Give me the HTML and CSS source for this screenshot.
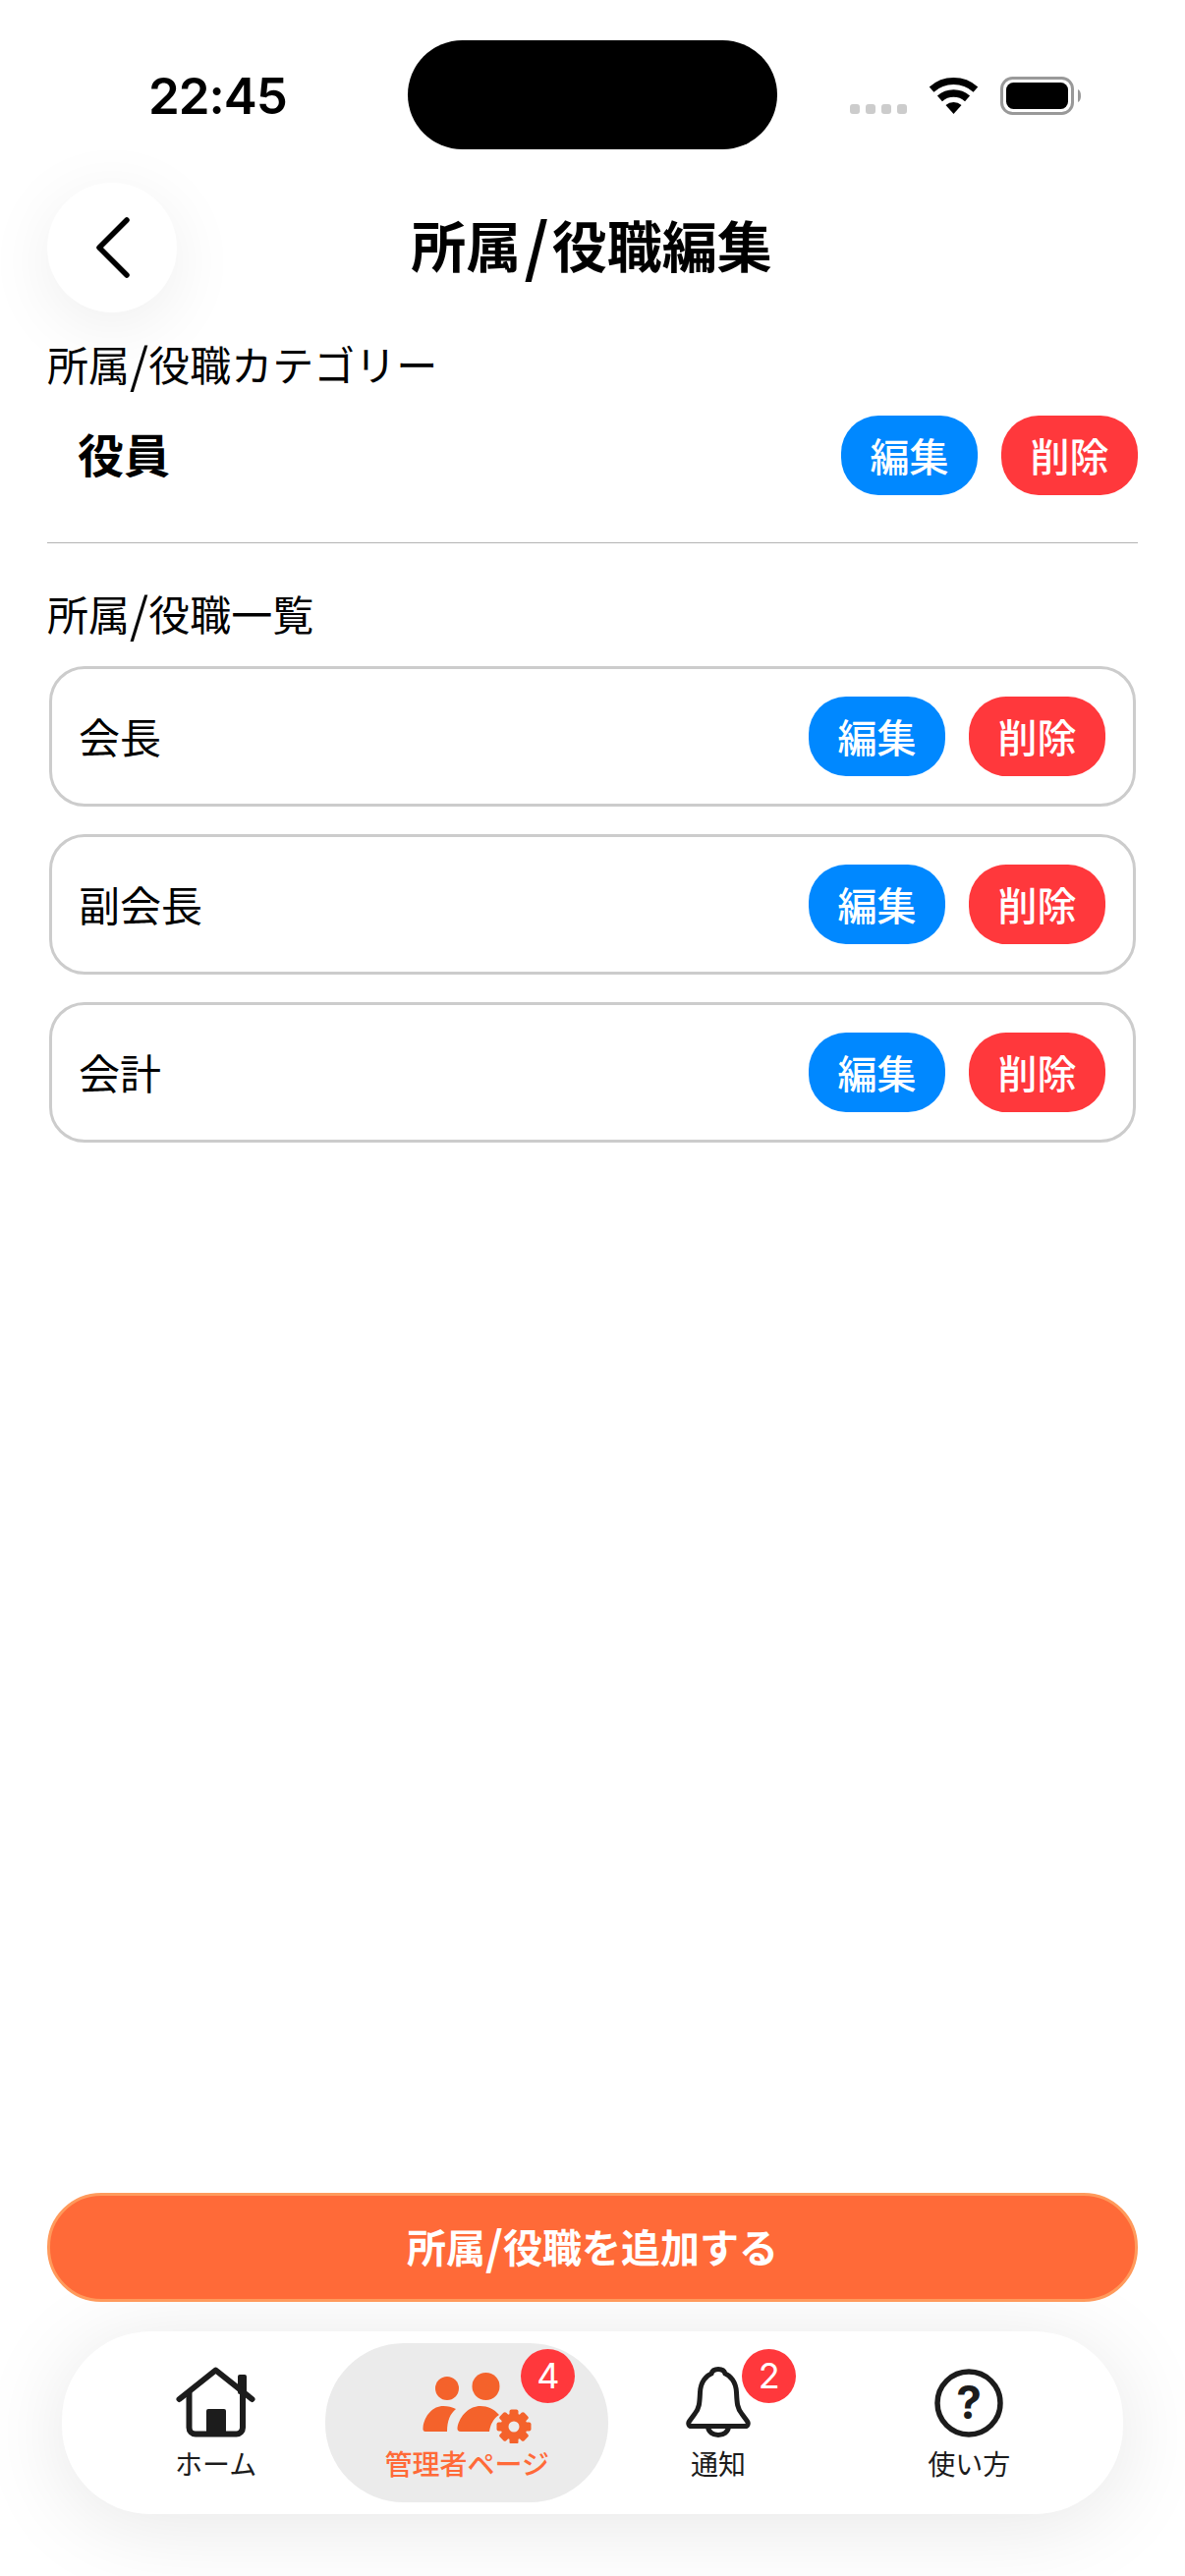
FILE: index.html
```html
<!DOCTYPE html>
<html lang="ja">
<head>
    <meta charset="UTF-8">
    <title>所属/役職編集</title>
    <link rel="stylesheet" href="styles.css">
</head>

<body>
    <div class="screen">
        <div class="status-bar">
            <span class="time">22:45</span>
            <div class="island"></div>
            <div class="status-icons">
                <div class="signal"><i></i><i></i><i></i><i></i></div>
                <svg class="wifi" width="51" height="37" viewBox="0 0 51 37">
                    <path d="M3.1 12.1A33.5 33.5 0 0 1 47.9 12.1" fill="none" stroke="#000" stroke-width="7"/>
                    <path d="M11.45 21.4A21 21 0 0 1 39.55 21.4" fill="none" stroke="#000" stroke-width="7.5"/>
                    <path d="M25.5 37L17.5 28.1A12 12 0 0 1 33.5 28.1Z" fill="#000"/>
                </svg>
                <svg class="battery" width="82" height="39" viewBox="0 0 82 39">
                    <rect x="1.5" y="1.5" width="72" height="36" rx="11" fill="none" stroke="#999" stroke-width="3"/>
                    <rect x="6" y="6" width="63" height="27" rx="7.5" fill="#000"/>
                    <path d="M79 13v13c2.500-1 3-4 3-6.500s-.5-5.500-3-6.500z" fill="#999"/>
                </svg>
            </div>
        </div>

        <div class="page-header">
            <button class="back-btn" type="button">
                <svg width="40" height="66" viewBox="0 0 40 66">
                    <path d="M35 5L7 33l28 28" fill="none" stroke="#000" stroke-width="5.500" stroke-linecap="round" stroke-linejoin="round"/>
                </svg>
            </button>
            <h1>所属<span class="slash">/</span>役職編集</h1>
        </div>

        <main class="content">
            <h2 class="section-label">所属<span class="slash">/</span>役職カテゴリー</h2>
            <div class="category-row">
                <span class="category-name">役員</span>
                <div class="actions">
                    <button class="btn btn-edit" type="button">編集</button>
                    <button class="btn btn-delete" type="button">削除</button>
                </div>
            </div>

            <h2 class="section-label list-label">所属<span class="slash">/</span>役職一覧</h2>
            <div class="role-list">
                <div class="role-card">
                    <span>会長</span>
                    <div class="actions">
                        <button class="btn btn-edit" type="button">編集</button>
                        <button class="btn btn-delete" type="button">削除</button>
                    </div>
                </div>
                <div class="role-card">
                    <span>副会長</span>
                    <div class="actions">
                        <button class="btn btn-edit" type="button">編集</button>
                        <button class="btn btn-delete" type="button">削除</button>
                    </div>
                </div>
                <div class="role-card">
                    <span>会計</span>
                    <div class="actions">
                        <button class="btn btn-edit" type="button">編集</button>
                        <button class="btn btn-delete" type="button">削除</button>
                    </div>
                </div>
            </div>
        </main>

        <button class="add-btn" type="button">所属<span class="slash">/</span>役職を追加する</button>

        <nav class="tab-bar">
            <a class="tab">
                <svg width="81" height="72" viewBox="0 0 81 72">
                    <rect x="63" y="8" width="9" height="20" rx="2" fill="#1c1c1c"/>
                    <path d="M3.500 33L40.500 3.500 77.500 33" fill="none" stroke="#1c1c1c" stroke-width="6" stroke-linecap="round" stroke-linejoin="round"/>
                    <path d="M13.500 25V62a6.500 6.500 0 0 0 6.500 6.500H61.500a6.500 6.500 0 0 0 6.500-6.500V25" fill="none" stroke="#1c1c1c" stroke-width="6"/>
                    <rect x="31" y="43" width="20" height="26" rx="2" fill="#1c1c1c"/>
                </svg>
                <span>ホーム</span>
            </a>
            <a class="tab tab-active">
                <svg class="admin-icon" width="111" height="73" viewBox="0 0 111 73">
                    <g fill="#f4622b">
                        <circle cx="25" cy="17" r="12"/>
                        <circle cx="64.500" cy="15" r="14"/>
                        <path d="M3 61Q0 61 .5 57C2 44 11 35 21 35C26 35 30 36 34 38C28 43 25 50 25 61Z"/>
                        <path d="M39 61Q35 61 35.500 57C38 44 48 35 59 35C66 35 73 38 78 44C72 48 69 54 68 61Z"/>
                        <g transform="translate(93 56)">
                            <rect x="-4.500" y="-17.500" width="9" height="35" rx="2"/>
                            <rect x="-4.500" y="-17.500" width="9" height="35" rx="2" transform="rotate(45)"/>
                            <rect x="-4.500" y="-17.500" width="9" height="35" rx="2" transform="rotate(90)"/>
                            <rect x="-4.500" y="-17.500" width="9" height="35" rx="2" transform="rotate(135)"/>
                            <circle r="13.500"/>
                            <circle r="5.500" fill="#ebebeb"/>
                        </g>
                    </g>
                </svg>
                <span>管理者ページ</span>
                <b class="badge badge-admin">4</b>
            </a>
            <a class="tab">
                <svg width="66" height="72" viewBox="0 0 66 72">
                    <path d="M5.500 60.500H60.500C63 60.500 64 57.500 62.500 55.500L57 48C52 42 52 36 51.500 26C51 15 45 9 40 7C39 3.500 36 2.500 33 2.500C30 2.500 27 3.500 26 7C21 9 15 15 14.500 26C14 36 14 42 9 48L3.500 55.500C2 57.500 3 60.500 5.500 60.500Z" fill="none" stroke="#1c1c1c" stroke-width="5"/>
                    <path d="M22.500 60.500C22.500 72.500 43.500 72.500 43.500 60.500" fill="none" stroke="#1c1c1c" stroke-width="5"/>
                </svg>
                <span>通知</span>
                <b class="badge badge-notice">2</b>
            </a>
            <a class="tab">
                <svg width="70" height="72" viewBox="0 0 70 72">
                    <circle cx="35" cy="37" r="32" fill="none" stroke="#1c1c1c" stroke-width="5.500"/>
                    <text class="help-mark" x="35" y="53" text-anchor="middle">?</text>
                </svg>
                <span>使い方</span>
            </a>
        </nav>
    </div>
</body>

</html>
```

FILE: styles.css
```css
* {
    box-sizing: border-box;
}

body {
    margin: 0;
    background-color: #fff;
    color: #000;
    font-family: "Noto Sans CJK JP", "Noto Sans", sans-serif;
}

button {
    font-family: inherit;
    border: none;
    padding: 0;
}

.screen {
    width: 1206px;
    height: 2622px;
    display: flex;
    flex-direction: column;
    overflow: hidden;
}

/* スラッシュは少し長く太めに */
.slash {
    font-size: 1.16em;
    line-height: 0;
    vertical-align: -0.04em;
}

.page-header .slash {
    margin: 0 0.05em;
}

/* ステータスバー */
.status-bar {
    height: 111px;
    margin-top: 41px;
    padding-left: 151px;
    display: flex;
    align-items: center;
}

.time {
    width: 264px;
    padding-top: 2px;
    font-family: Inter, sans-serif;
    font-size: 51px;
    font-weight: 600;
    line-height: 60px;
    letter-spacing: -1px;
}

.island {
    width: 376px;
    height: 111px;
    background-color: #000;
    border-radius: 56px;
}

.status-icons {
    margin-left: 74px;
    display: flex;
    align-items: flex-end;
    height: 39px;
    margin-top: 2px;
}

.signal {
    display: flex;
    gap: 6px;
    margin-bottom: 1px;
}

.signal i {
    width: 10px;
    height: 10px;
    border-radius: 3px;
    background-color: #ccc;
}

.wifi {
    margin-left: 22px;
    margin-bottom: 1px;
}

.battery {
    margin-left: 22px;
}

/* ヘッダー */
.page-header {
    margin-top: 34px;
    padding: 0 48px;
    display: grid;
    grid-template-columns: 132px 1fr 132px;
    align-items: center;
}

.back-btn {
    width: 132px;
    height: 132px;
    border-radius: 50%;
    background-color: #fff;
    box-shadow: 0 14px 70px rgba(0, 0, 0, 0.07);
    display: flex;
    align-items: center;
    justify-content: center;
}

.page-header h1 {
    margin: 0 2px 8px 0;
    text-align: center;
    font-size: 56px;
    font-weight: 700;
    line-height: 80px;
}

/* 本文 */
.content {
    flex: 1;
    padding: 26px 48px 0;
}

.section-label {
    margin: 0;
    padding-bottom: 4px;
    font-size: 42px;
    font-weight: 400;
    line-height: 52px;
}

.category-row {
    margin-top: 23px;
    padding: 0 0 48px 31px;
    display: flex;
    align-items: center;
    justify-content: space-between;
    border-bottom: 1px solid #b4b4b4;
}

.category-name {
    margin-top: -6px;
    font-size: 47px;
    font-weight: 700;
}

.list-label {
    margin-top: 45px;
}

.role-list {
    margin: 24px 2px 0;
    display: flex;
    flex-direction: column;
    gap: 28px;
}

.role-card {
    height: 143px;
    padding: 0 28px 0 27px;
    display: flex;
    align-items: center;
    justify-content: space-between;
    border: 3px solid #ccc;
    border-radius: 36px;
    font-size: 42px;
}

.role-card > span {
    margin-top: -3px;
}

.actions {
    display: flex;
    gap: 24px;
}

.btn {
    width: 139px;
    height: 81px;
    border-radius: 38px;
    color: #fff;
    font-size: 40px;
    font-weight: 500;
    line-height: 79px;
}

.btn-edit {
    background-color: #0088ff;
}

.btn-delete {
    background-color: #ff383c;
}

/* 追加ボタン */
.add-btn {
    position: relative;
    z-index: 1;
    height: 111px;
    margin: 0 48px;
    padding-bottom: 3px;
    flex-shrink: 0;
    background-color: #ff6a38;
    border: 3px solid #ff9a5c;
    border-radius: 55px;
    color: #fff;
    font-size: 40px;
    font-weight: 700;
}

/* タブバー */
.tab-bar {
    height: 186px;
    margin: 30px 63px 63px;
    padding: 12px 29px;
    flex-shrink: 0;
    display: flex;
    background-color: #fff;
    border-radius: 90px;
    box-shadow: 0 10px 90px rgba(0, 0, 0, 0.1);
}

.tab {
    position: relative;
    width: 255.500px;
    height: 162px;
    padding-top: 24px;
    display: flex;
    flex-direction: column;
    align-items: center;
    color: #1c1c1c;
    font-size: 28px;
    line-height: 40px;
}

.tab svg {
    height: 72px;
    flex-shrink: 0;
}

.tab .admin-icon {
    height: 73px;
    margin: 5px 0 -6px 20px;
}

.tab span {
    margin-top: 6px;
}

.tab-active {
    margin: 0 -16px;
    width: 288px;
    flex-shrink: 0;
    background-color: #ebebeb;
    border-radius: 80px;
    color: #ff6a38;
    font-weight: 500;
}

.help-mark {
    font-family: Inter, sans-serif;
    font-size: 46px;
    font-weight: 700;
    fill: #1c1c1c;
}

.badge {
    position: absolute;
    top: 6px;
    width: 55px;
    height: 55px;
    border-radius: 50%;
    background-color: #ff383c;
    color: #fff;
    font-family: Inter, sans-serif;
    font-size: 36px;
    font-weight: 400;
    line-height: 55px;
    text-align: center;
}

.badge-admin {
    left: 199px;
}

.badge-notice {
    left: 152px;
}
```
